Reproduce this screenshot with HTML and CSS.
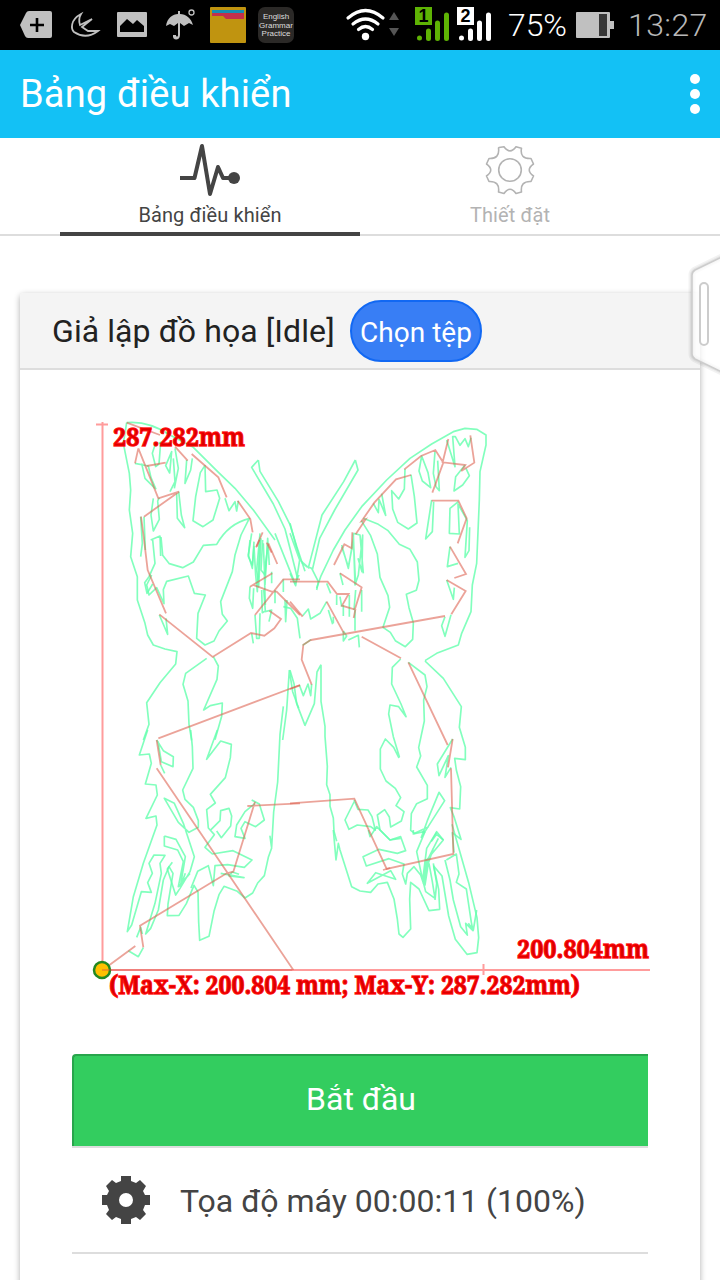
FILE: index.html
```html
<!DOCTYPE html>
<html lang="vi">
<head>
<meta charset="utf-8">
<meta name="viewport" content="width=device-width, initial-scale=1">
<title>Bảng điều khiển</title>
<link rel="stylesheet" href="styles.css">
</head>
<body>
<div class="screen">
  <div class="status-bar">
    <svg class="status-icons" viewBox="0 0 500 50" width="500" height="50">
      <g fill="#c0c0c0">
        <path d="M20 25l6-12q1-2 3-2h21q2 0 2 2v23q0 2-2 2H28q-2 0-3-2z"/>
        <path d="M30 25h14M37 18v14" stroke="#000" stroke-width="2.6"/>
        <path d="M81 14C70 20 71 29 74 32Q86 40 98 31L88 31 82 27 92 19 80 25Q78 19 81 14Z" fill="none" stroke="#c0c0c0" stroke-width="1.8"/>
        <rect x="117" y="12" width="30" height="25" rx="1"/>
        <path d="M120 32v-6l7-7 6 5 4-4 7 6v6z" fill="#000"/>
        <path d="M166 26c1-8 7-12 12-12V11h2v3c6 0 11 4 13 11l-4-2-5 3-4-3v12c0 6-8 6-7 0h3c0 2 2 2 2 0V23l-4 3-4-2z"/>
        <circle cx="191.500" cy="12.500" r="2.500" fill="none" stroke="#c0c0c0" stroke-width="1.300"/>
      </g>
      <rect x="210" y="7" width="36" height="36" rx="1" fill="#c09410"/>
      <path d="M212 10h32v3h-32z" fill="#168eb4"/>
      <path d="M212 13h32v6h-18l-3-3h-11z" fill="#c3304b"/>
      <rect x="258" y="7" width="36" height="36" rx="7" fill="#2b2927"/>
      <g class="app-label"><text x="276" y="18.500">English</text><text x="276" y="27.500">Grammar</text><text x="276" y="36.300">Practice</text></g>
      <g fill="none" stroke="#fff" stroke-width="3.200" stroke-linecap="round">
        <path d="M348 18q17.500-15 35 0M353 24q12.500-10 25 0M358.500 29.500q7-6 14 0"/>
      </g>
      <circle cx="365.500" cy="36.500" r="3.700" fill="#fff"/>
      <path d="M389 20l5-8 5 8zM389 28h10l-5 8z" fill="#555"/>
      <rect x="415" y="7" width="17" height="18" fill="#5eb304"/>
      <path d="M419.500 38v0M428.500 31v7.500M437.500 23v15.500M446.500 15v23.500" stroke="#5eb304" stroke-width="5" stroke-linecap="round"/>
      <rect x="457" y="7" width="17" height="18" fill="#fff"/>
      <path d="M461.500 38v0M470.500 31v7.500M479.500 23v15.500M488.500 15v23.500" stroke="#fff" stroke-width="5" stroke-linecap="round"/>
      <g class="sim"><text x="423.500" y="22">1</text><text x="465.500" y="22">2</text></g>
    </svg>
    <span class="percent">75%</span>
    <svg class="battery" viewBox="0 0 38 26" width="38" height="26"><path d="M1 0h32q1 0 1 1v8h4v8h-4v8q0 1-1 1H1q-1 0-1-1V1q0-1 1-1z" fill="#c0c0c0"/><path d="M23 2h8v22h-8z" fill="#383838"/></svg>
    <span class="clock">13:27</span>
  </div>
  <header class="app-bar">
    <h1 class="app-title">Bảng điều khiển</h1>
    <div class="overflow"><i></i><i></i><i></i></div>
  </header>
  <nav class="tabs">
    <div class="tab tab-active">
      <svg viewBox="0 0 60 54" width="60" height="54"><path d="M0 35h14.500L22 3l8 48 8-27 5 11h11" fill="none" stroke="#444" stroke-width="4" stroke-linejoin="round"/><circle cx="54" cy="35" r="6" fill="#444"/></svg>
      <span class="tab-label tab-main">Bảng điều khiển</span>
    </div>
    <div class="tab">
      <svg viewBox="0 0 60 54" width="60" height="54"><g fill="none" stroke="#b3b3b3" stroke-width="1.600" stroke-linejoin="round"><circle cx="30" cy="27" r="11.300"/><path d="M19 4.500l5-.8Q30 12 36 3.700l5.500 1.500Q39.500 16 51 15.500l2.500 5.500Q45 27 53.500 33L51 38.500Q40 38 41.500 49l-5.500 1.500Q30 42 24 50.500L18.500 49Q20 38 9 38.500L6.500 33Q15 27 6.500 21L9 15.500Q20 16 18.500 5z"/></g></svg>
      <span class="tab-label tab-settings">Thiết đặt</span>
    </div>
  </nav>
  <main class="content">
    <section class="card">
      <div class="card-head"><span class="card-title">Giả lập đồ họa [Idle]</span><button class="pick" type="button">Chọn tệp</button></div>
      <div class="card-body">
        <svg class="plot" viewBox="72 410 588 610" width="588" height="610">
          <g class="axis"><path d="M102.500 422v548M96 424.500h12M102 970h548M483.500 964v11"/></g>
          <g class="cut">
            <g transform="translate(80 410) scale(.33333)">
              <path d="M140 38Q205 32 270 75L340 112 410 182 465 235 520 300 585 390"/>
              <path d="M140 38L130 100 148 190 152 240 148 300 158 370 152 440 172 500 172 570 195 640 203 675 220 705 255 717 291 725 287 762 240 818 200 878 207 943 190 990"/>
              <path d="M535 150l-20 22 65 110 35 75 18 70 20 80M535 150l5 34 55 90 35 70 20 65 25 75"/>
              <path d="M165 160l40 8 8 35 15 35M185 160l10 45 30 30M225 105l-8 25 10 40 10-8 5-65zM275 125l-18 42 12 22zM280 145l5 70-15 30M285 115l10 60-12 60M320 150l-5 70 17-40 5-35M375 165l2 80 34-5 8 25-20 65-30 20-30-18 8-72 14-72 14-22M290 250l2 75 22 28-10-38-8-70M220 265l-7 50 7 48 18-35-5-55 5-10M212 390l28-12 2 60M182 320l5 80-5 40M192 320l4 100"/>
              <path d="M435 265l12 37 18-27 5 28 5-30M510 325Q445 340 410 403l-40 3-30 50-32 17-40-12-20-25-5-55M508 325l-25 50-18 60-8 50-35 90 5 38 15 20-25 30-15 30-27 12-25-20 4-75 22-55-33-5-18-52-65 16-10 25 2 42-22-48-23 22-7-30 15-30"/>
              <path d="M515 370l-10 65 12 40 5-80M540 370l-10 110 6 50 7-145M550 400l5 125 8-140 5 80M565 400l-12 85 3 100M585 370l60 150 12-25"/>
            </g>
            <g transform="translate(80 540) scale(.33333)">
              <path d="M218 0l7 70-18 40-13 18 7 32 17-28M238 225l25 58-5-48M510 0l-5 50 12 25 5-55 5 85 5 50 8-155M548 0l-5 90 12 15 8-90M510 140l-2 35 10 30 3-60M545 150l2 68 9-5-5-65M525 225l5 70 8 0 2-75M585 150v40M615 180l2 65 4-65M610 118v38M575 95v35M555 215l20-5-8 35M515 280l5 30M380 355l-63 45-8 33 15 50 3 70 8 48M400 350l15 28-4 40-40 92 20-13 36-8-2 40-20 70M628 390l-8 120-12 90M628 390l10 65 18 50"/>
              <path d="M610 200l22 5 20 30 8 60"/>
            </g>
            <g transform="translate(290 420) scale(.33333)">
              <path d="M80 505L92 470 130 390 165 330 215 260 290 180 360 115 425 72 490 35 525 25 560 28 588 45 588 75 570 155 568 240 560 430 547 495 543 575 515 640 505 675 440 700 405 722"/>
              <path d="M80 510l5-25-20-40-15-5-15-13M196 120l-35 65-65 100-40 155M196 120l8 30-70 120-45 85-22 95M0 310l30 110 28 25M0 460l17 37 12-77-29-80"/>
              <path d="M345 147l-2 60-17 30-21-25 3 55 15 40 32 20 26-18-8-80-10-65M250 250l15 28 2-40 20 48-12-65M395 108l-8 45 10 30 25 20-8-45zM435 95l-5 65 8 40 10 12-5-90M470 60l25 80-7-90 8 0 14 26 15-20 10 24 8-27M525 135l-28 35-5 43 26-18 20-28-10-22M425 240l-18 117 20-22 4-90M505 245l-25 20-2 75 30 2-4-90 28 50-7 110 12-20 2-70M480 380l-8 60 32-10M470 480l20 58 3-35M465 590l-10 27 10 32 18-65"/>
              <path d="M220 295l45 18 28 18 35 42 32 15 22 38 5 55-8 30-30 12 8 40 13 45-2 50-22 22-30-18-15-25-22-15 20-60-5-35-24-55-8-70-20-55-28-45"/>
              <path d="M155 380l20 60 12-60M190 340l5 155 10-30 13-120-2 110-12-40M190 340l20 5 10 115M150 460l9 35M110 490l12 30M140 525v30M150 530l5 30M160 555v33M178 525v65M195 570v62M215 510v65M197 510l-5 60M155 375l20 70 15-90 7 140M110 545l-20 35-28 17-7-30-17 20M115 570l13 43M160 635v28l10-15-10-15M175 660l30-14 3 36M38 676l25-17M130 590v20"/>
            </g>
            <g transform="translate(80 730) scale(.33333)">
              <path d="M203 0l-25 75 30-3 6 28-18 62 32 3 4 30-34 70 30-7 3 27-41 115-30 100-18 105 13-20 29-100 30 2-11-29 14-28-10-30 15-25 33 1-15 24 4 30-19 90-28 92 15-17 23-55 15-90 17-40 12 20-15 92-2 35 35-1 22-35 23-55 12 20 2 90 3 55 28-12 15-75 15-50 15-25 40 15 23 20 23-15 15-30 20-22 12-55 10-28-5-35 5 32 6-105 12-90 7-142 10-85"/>
              <path d="M332 0l5 50 2 65-31 65 7 28 25 24 15 40v20l-28 15-32-30-42-72 30 15 27 60 33 100-13 45-30 50-13 20-25-78 15-20M253 318v30l40 12 17 35-15 75 35-40M253 318l35 10 28 52-15 90 15-40M230 30l20 32 30 18-1 30-35-15-10-60M242 105l12 25M412 0l-32 88 42-55 32 10-3 40-15 60-45 50 15 26-26 20 5 55 18 20-28 38 22 20 62-10 57 28-23 22-50-8-38 3-5 60-15-60-32 17-20 50M410 303l14 20 28-35 3-30-8-23-25 7-2 30-30 30M525 220l-30 25-25 40-5 35 30 5-12-30 12-20 32 15 26-20-15-48-23-12M422 430l70 13-45-5 10-12 20 7M170 622l12-30 5 20M145 662l30 18 15-27"/>
            </g>
            <g transform="translate(290 640) scale(.33333)">
              <path d="M405 63l55 52 54 85-6 62 18 60v37l-32-4 5 35 13 50-3 67-28-4 12 30 20 65-26-20 5 60M332 57l-25 25-2 50 28 60 15 38-22-30-26-5-4 27 14 68 18 60-2 2-15-30-25-25-15 30 0 60 17 36 28 22 16 28-14 24 24 18-8 28-32 18-4-30-14-22-22 16 8 45 30 30 32-5M355 67l50 38 6 35-10 40 2 63-17 80 6 25-12 33 32 55v40l-32 15-16 30-2 50 12 9 42-20M93 74l-12 22-8 95-28 65-25-65-8-60-12-40M93 74v110l12 75 0 30 7 90-2 55 10 30v35l10 35 2 40 8 30M28 135l12 32 14-35 8 35 3-35M195 480l-30 60 12 28 25-13 40 5 14 10-10-40-12-20-30-2-12-28M488 297l-46 75 5 35 28-60-10 65 18-30M447 457l17 25-70 110 18-50zM440 578l-15 25 15-20 20 17"/>
            </g>
            <g transform="translate(290 830) scale(.33333)">
              <path d="M130 0l8 90 7-50 5 20 35 110 25 13 32 4 22-25 28-5 20 50 10 60 5 45 12 10 23-25-3-90 3-50 25 20 30 65 32-4-3-60-15-70 25 30 20 120 20 70 35 45 30-5 5-45-5-60-25-105-50-175"/>
              <path d="M235 0l5 20 20-30 40 40 32-10 15 42-25 8-55-12-48 22 10 28 68-22 45 16-5 30 10 30 5-32 20-20 20 25 10 30 5 20 28 20-8-50-10-55M370 0v12l35-8M405 5l-25 60 20 95 10-70 50-60-20-25-30 50-10 80 5 30 10-65 15-45M445 25l-30 60-12 70M465 90l15 60 10 60 22 80 20 25-5-35 22 22-5-25-15-100-30-20 8-25-8-60-30 18M232 160l70-38 15 26-60-20zM430 100l10 60-5 50M560 240l-10 60-15-20"/>
            </g>
          </g>
          <g class="travel">
            <g transform="translate(80 410) scale(.33333)"><path d="M140 38L240 75M175 115l-10 45M175 115l60 150 62-20-105 75M200 168l57-10M285 110l38 42M335 132l80 70 25 60M473 272l38 55 7 40M528 412l20-45M560 398l15 30"/></g>
            <g transform="translate(80 540) scale(.33333)"><path d="M183-70l8 60 12 100 55 130M238 223l160 128 115-72 40 8 30-22 20-28-35-25M525 225l85-107h50M510 140l67-40M520 135l55 20h15l70 70M530 20l8-20M565 10l27 62M235 595l425-160"/></g>
            <g transform="translate(290 420) scale(.33333)"><path d="M0 485h113l28 37h35l-20 35 40 12-5 25M0 545l38 45M110 545l52 95M63 660l402-72M215 650l118 65M132 435l31-62 22 12 2-48M150 460l65 42-20 65M197 343l30-45-12 5 38-55 65-70 45-13M343 148l50-40 43-18 24 38-33 90M475 57l-17 70 68 8-12 18 39-25-12-82M425 242h80l25 53-27 75M480 380l48 82-35 12M470 480l57 33-43 70"/></g>
            <g transform="translate(80 730) scale(.33333)"><path d="M230 30l12 75M230 115l410 605M502 228l158-8M525 215l-65 210-20 5-260 157 10 65M68 720l98-72"/></g>
            <g transform="translate(290 640) scale(.33333)"><path d="M63-1l-23 15-5 45 30 75M0 147l30-11M0 490l193-14 97 211 200-45-7-257M355 67l118 248M488 297l-14 85"/></g>
            <path d="M383 870l7-2"/>
          </g>
          <circle cx="102" cy="970" r="8" fill="#ffc000" stroke="#238820" stroke-width="2.500"/>
          <path d="M102 970h190" stroke="#d74b40" stroke-width="1.200" opacity=".7"/>
          <g class="measure">
            <text x="113" y="446" textLength="132" lengthAdjust="spacingAndGlyphs">287.282mm</text>
            <text x="517" y="958" textLength="132" lengthAdjust="spacingAndGlyphs">200.804mm</text>
            <text x="109" y="994" textLength="471" lengthAdjust="spacingAndGlyphs">(Max-X: 200.804 mm; Max-Y: 287.282mm)</text>
          </g>
        </svg>
        <button class="start" type="button">Bắt đầu</button>
        <div class="job-row">
          <svg viewBox="0 0 48 48" width="48" height="48"><path fill="#444" fill-rule="evenodd" d="M19 0h10v5l5 2 4-3 6 6-3 5 2 4h5v10h-5l-2 5 3 4-6 6-4-3-5 2v5H19v-5l-5-2-4 3-6-6 3-4-2-5H0V19h5l2-4-3-5 6-6 4 3 5-2zM24 17a7 7 0 100 14 7 7 0 000-14z"/></svg>
          <span class="job-text">Tọa độ máy 00:00:11 (100%)</span>
        </div>
      </div>
    </section>
  </main>
  <svg class="drawer" viewBox="0 0 36 132" width="36" height="132"><g fill="none" stroke="#000" stroke-opacity=".05"><path id="edge" d="M40 6L11 20q-3 2-3 5v79q0 3 3 5l29 14" stroke-width="7"/><path d="M40 6L11 20q-3 2-3 5v79q0 3 3 5l29 14" stroke-width="4"/></g><path d="M40 6L11 20q-3 2-3 5v79q0 3 3 5l29 14" fill="#fff" fill-opacity=".7" stroke="#ccc" stroke-width="1.600"/><rect x="16" y="33" width="8" height="62" rx="4" fill="#fff" stroke="#ccc" stroke-width="2"/></svg>
</div>
</body>
</html>
```
FILE: styles.css
```css
* { box-sizing: border-box; }
body { margin: 0; background: #fff; font-family: Roboto, "Noto Sans", sans-serif; }
.screen { position: relative; width: 720px; height: 1280px; overflow: hidden; background: #fff; }
.status-bar { display: flex; align-items: center; height: 50px; background: #000; color: #fff; }
.status-icons { display: block; flex: none; }
.app-label { fill: #ddd; font: 8px "Liberation Sans", sans-serif; text-anchor: middle; }
.sim { fill: #000; font: bold 18px "Liberation Sans", sans-serif; text-anchor: middle; }
.percent { width: 68px; margin-left: 8px; font-size: 32px; font-weight: 300; white-space: nowrap; letter-spacing: -.1px; }
.battery { flex: none; }
.clock { margin-left: 14px; color: #b8b8b8; font-size: 32px; font-weight: 300; letter-spacing: .4px; }
.app-bar { display: flex; align-items: center; justify-content: space-between; height: 88px; padding: 0 20px; background: #13c1f5; color: #fff; }
.app-title { margin: 0; font-size: 38px; font-weight: 400; letter-spacing: .16px; }
.overflow { display: flex; flex-direction: column; gap: 5px; }
.overflow i { width: 10px; height: 10px; border-radius: 50%; background: #fff; }
.tabs { display: flex; height: 98px; padding: 0 60px; border-bottom: 2px solid #ddd; }
.tab { display: flex; flex-direction: column; align-items: center; width: 300px; height: 98px; padding-top: 5px; color: #b3b3b3; }
.tab svg { flex: none; }
.tab-active { border-bottom: 4px solid #444; color: #444; }
.tab-label { margin-top: 6px; font-size: 20px; line-height: 24px; letter-spacing: .1px; }
.content { padding: 57px 20px 0; }
.card { height: 1000px; background: #fff; border-radius: 4px 4px 0 0; box-shadow: 0 2px 6px rgba(0,0,0,.32); }
.card-head { display: flex; align-items: center; height: 77px; padding-left: 32px; border-bottom: 2px solid #ddd; background: #f4f4f4; border-radius: 4px 4px 0 0; }
.card-title { width: 298px; color: #222; font-size: 32px; white-space: nowrap; letter-spacing: .08px; }
.pick { width: 132px; height: 62px; padding: 4px 0 0; border: 2px solid #1168f3; border-radius: 31px; background: #387ef5; color: #fff; font: 28px Roboto, sans-serif; white-space: nowrap; }
.card-body { padding: 40px 52px 0; }
.plot { display: block; }
.axis { fill: none; stroke: #ff9c9c; stroke-width: 2; }
.cut { fill: none; stroke: #63ffad; stroke-width: 5; stroke-opacity: .8; stroke-linejoin: round; }
.travel { fill: none; stroke: #dc6050; stroke-width: 5.4; stroke-opacity: .58; }
.travel > path { stroke-width: 1.8; }
.measure { fill: #d80000; stroke: #f00; stroke-width: 1.3; stroke-opacity: .85; font: bold 25px "Noto Serif", "DejaVu Serif", serif; }
.start { display: block; width: 576px; height: 92px; margin-top: 34px; padding: 0 0 4px; border: solid #28a54c; border-width: 2px 0 0 2px; border-radius: 4px 0 0 0; background: #33cd5f; color: #fff; font: 32px Roboto, sans-serif; }
.job-row { display: flex; align-items: center; gap: 30px; height: 108px; padding-left: 30px; border: solid #ddd; border-width: 2px 0; color: #444; }
.job-text { padding-top: 2px; font-size: 32px; }
.drawer { position: absolute; right: 0; top: 250px; }
```
